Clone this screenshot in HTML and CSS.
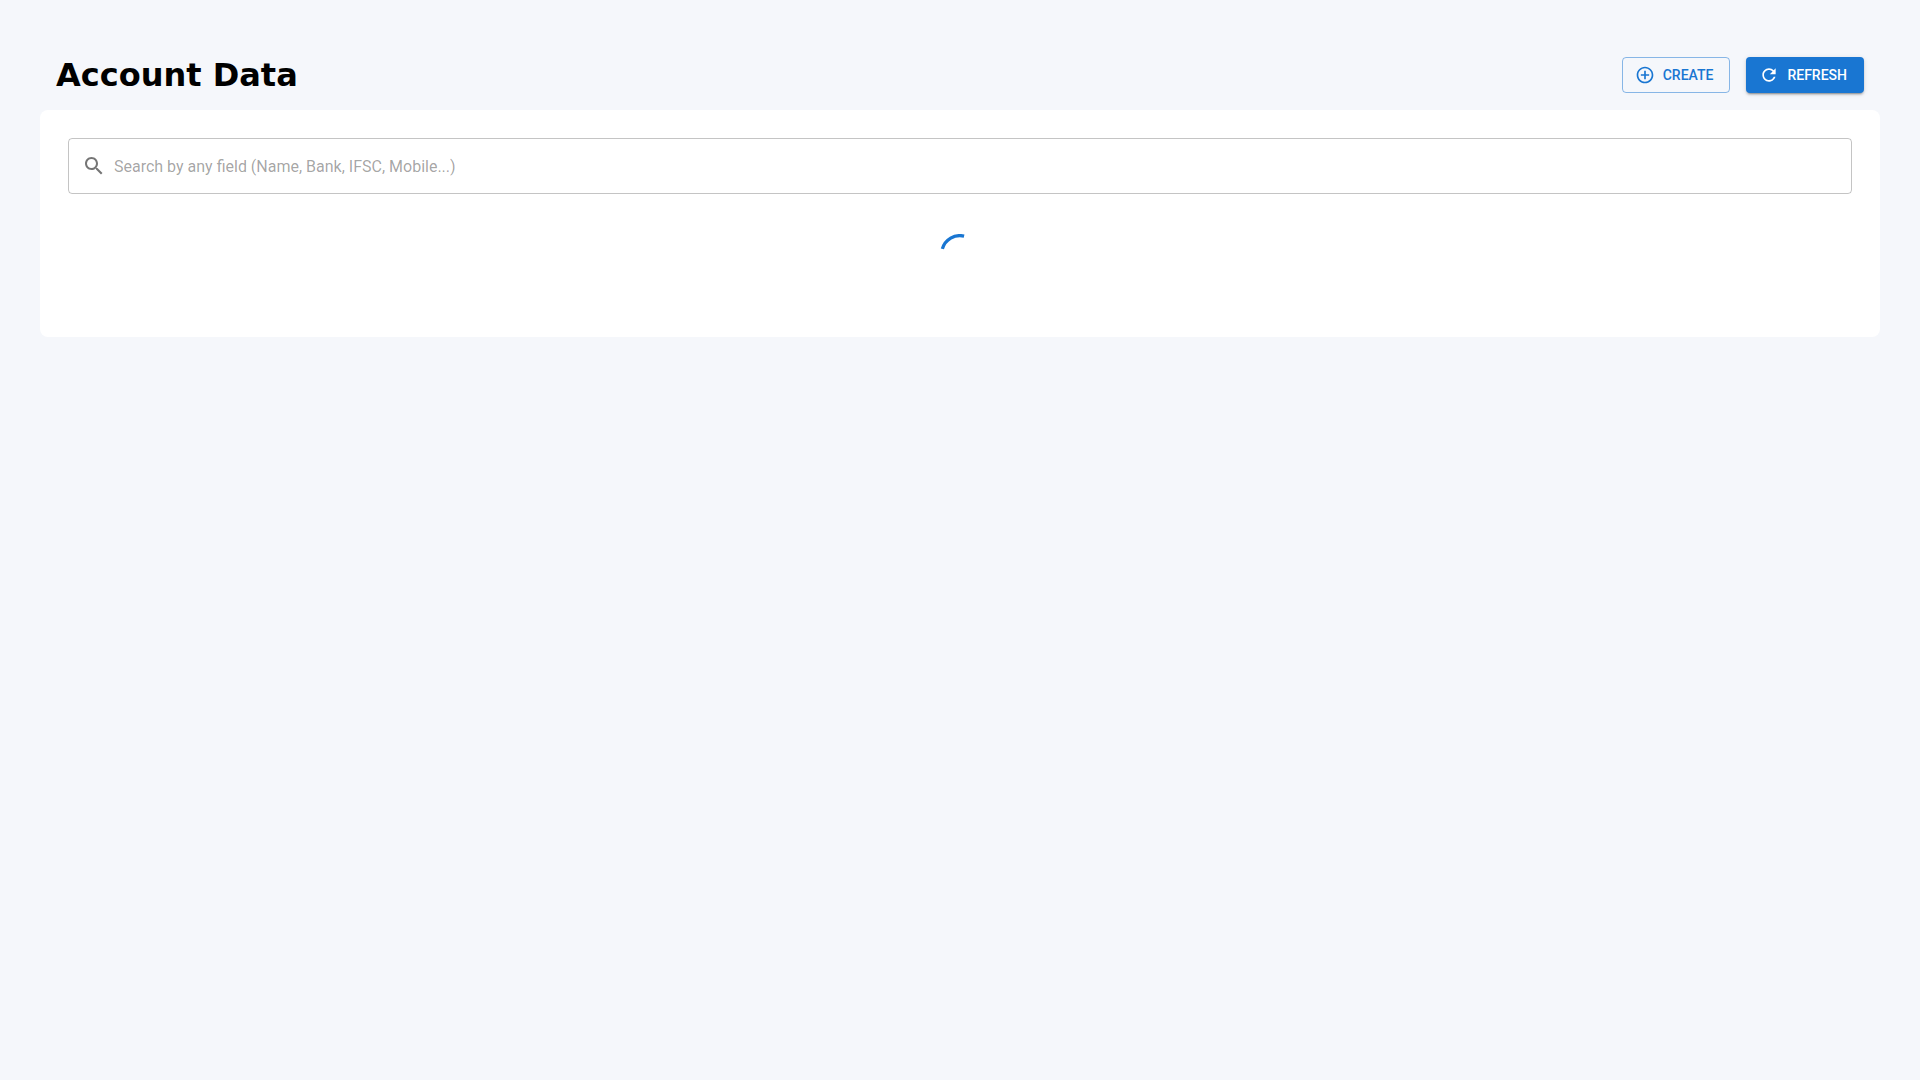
FILE: index.html
```
<!DOCTYPE html>
<html lang="en">
<head>
  <meta charset="UTF-8">
  <meta name="viewport" content="width=device-width, initial-scale=1">
  <title>Account Data</title>
  <link rel="stylesheet" href="styles.css">
</head>
<body>
  <main class="page">
    <header class="page-header">
      <h1 class="page-title">Account Data</h1>
      <div class="actions">
        <button type="button" class="button button-outlined">
          <svg class="button-icon" viewBox="0 0 24 24" aria-hidden="true">
            <path d="M13 7h-2v4H7v2h4v4h2v-4h4v-2h-4V7zm-1-5C6.48 2 2 6.48 2 12s4.48 10 10 10 10-4.48 10-10S17.52 2 12 2zm0 18c-4.41 0-8-3.59-8-8s3.59-8 8-8 8 3.59 8 8-3.59 8-8 8z"/>
          </svg>
          Create
        </button>
        <button type="button" class="button button-contained">
          <svg class="button-icon" viewBox="0 0 24 24" aria-hidden="true">
            <path d="M17.65 6.35C16.2 4.9 14.21 4 12 4c-4.42 0-7.99 3.58-7.99 8s3.57 8 7.99 8c3.73 0 6.84-2.55 7.73-6h-2.08c-.82 2.33-3.04 4-5.65 4-3.31 0-6-2.69-6-6s2.69-6 6-6c1.66 0 3.14.69 4.22 1.78L13 11h7V4l-2.35 2.35z"/>
          </svg>
          Refresh
        </button>
      </div>
    </header>

    <section class="card">
      <label class="search">
        <svg class="search-icon" viewBox="0 0 24 24" aria-hidden="true">
          <path d="M15.5 14h-.79l-.28-.27C15.41 12.59 16 11.11 16 9.5 16 5.91 13.09 3 9.5 3S3 5.91 3 9.5 5.91 16 9.5 16c1.61 0 3.09-.59 4.23-1.57l.27.28v.79l5 4.99L20.49 19l-4.99-5zm-6 0C7.01 14 5 11.99 5 9.5S7.01 5 9.5 5 14 7.01 14 9.5 11.99 14 9.5 14z"/>
        </svg>
        <input type="text" class="search-input" aria-label="Search accounts" placeholder="Search by any field (Name, Bank, IFSC, Mobile...)">
      </label>

      <div class="loading" role="progressbar" aria-label="Loading">
        <svg class="spinner" viewBox="22 22 44 44">
          <path d="M24.6 38.4A20.2 20.2 0 0 1 48.5 24.3"/>
        </svg>
      </div>
    </section>
  </main>
</body>
</html>
```
FILE: styles.css
```
* {
  box-sizing: border-box;
}

body {
  margin: 0;
  min-height: 100vh;
  font-family: Roboto, Helvetica, Arial, sans-serif;
  background: #f5f7fb;
  color: #000000;
}

.page {
  padding: 40px;
}

.page-header {
  display: flex;
  align-items: center;
  justify-content: space-between;
  padding: 16px;
}

.page-title {
  margin: 0;
  font-family: "DejaVu Sans", sans-serif;
  font-size: 32px;
  font-weight: 700;
  line-height: 38px;
}

.actions {
  display: flex;
  gap: 16px;
}

.button {
  display: inline-flex;
  align-items: center;
  border: none;
  border-radius: 4px;
  font-family: inherit;
  font-size: 14px;
  font-weight: 500;
  line-height: 24px;
  text-transform: uppercase;
  cursor: pointer;
}

.button-outlined {
  padding: 5px 16px;
  border: 1px solid rgba(25, 118, 210, 0.5);
  background: transparent;
  color: #1976d2;
}

.button-outlined:hover {
  background: rgba(25, 118, 210, 0.04);
}

.button-contained {
  padding: 6px 17px;
  background: #1976d2;
  color: #ffffff;
  box-shadow: 0 3px 1px -2px rgba(0, 0, 0, 0.2), 0 2px 2px 0 rgba(0, 0, 0, 0.14), 0 1px 5px 0 rgba(0, 0, 0, 0.12);
}

.button-contained:hover {
  background: #1565c0;
}

.button-icon {
  width: 20px;
  height: 20px;
  margin-left: -4px;
  margin-right: 8px;
  fill: currentColor;
}

.card {
  padding: 28px;
  border-radius: 8px;
  background: #ffffff;
}

.search {
  display: flex;
  align-items: center;
  gap: 8px;
  height: 56px;
  padding: 0 13px;
  border: 1px solid rgba(0, 0, 0, 0.23);
  border-radius: 4px;
}

.search:hover {
  border-color: rgba(0, 0, 0, 0.87);
}

.search:focus-within {
  border-color: #1976d2;
}

.search-icon {
  flex-shrink: 0;
  width: 24px;
  height: 24px;
  fill: rgba(0, 0, 0, 0.54);
}

.search-input {
  flex: 1;
  min-width: 0;
  height: 24px;
  padding: 0;
  border: none;
  outline: none;
  background: none;
  font-family: inherit;
  font-size: 16px;
  color: rgba(0, 0, 0, 0.87);
}

.search-input::placeholder {
  color: rgba(0, 0, 0, 0.37);
}

.loading {
  display: flex;
  justify-content: center;
  padding: 40px 0 35px;
}

.spinner {
  width: 40px;
  height: 40px;
  fill: none;
  stroke: #1976d2;
  stroke-width: 3.6;
}
```
